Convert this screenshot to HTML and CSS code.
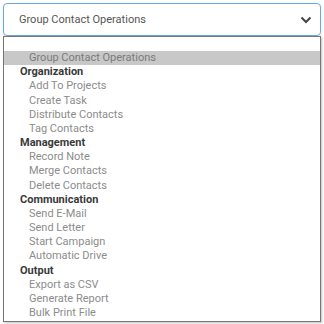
FILE: index.html
```html
<!DOCTYPE html>
<html lang="en">
<head>
    <meta charset="UTF-8">
    <title>Group Contact Operations</title>
    <link rel="stylesheet" href="styles.css">
</head>
<body>

    <!-- Select field -->
    <div class="select">
        <span class="select-value">Group Contact Operations</span>
        <svg class="chevron" width="12" height="8" viewBox="0 0 12 8">
            <path d="M1.5 1.5 L6 6 L10.5 1.5" fill="none" stroke="#444" stroke-width="2"/>
        </svg>
    </div>

    <!-- Open dropdown list -->
    <div class="menu">
        <div class="row"></div>
        <div class="row option selected">Group Contact Operations</div>

        <div class="row group">Organization</div>
        <div class="row option">Add To Projects</div>
        <div class="row option">Create Task</div>
        <div class="row option">Distribute Contacts</div>
        <div class="row option">Tag Contacts</div>

        <div class="row group">Management</div>
        <div class="row option">Record Note</div>
        <div class="row option">Merge Contacts</div>
        <div class="row option">Delete Contacts</div>

        <div class="row group">Communication</div>
        <div class="row option">Send E-Mail</div>
        <div class="row option">Send Letter</div>
        <div class="row option">Start Campaign</div>
        <div class="row option">Automatic Drive</div>

        <div class="row group">Output</div>
        <div class="row option">Export as CSV</div>
        <div class="row option">Generate Report</div>
        <div class="row option">Bulk Print File</div>
    </div>

</body>
</html>
```

FILE: styles.css
```css
body {
    margin: 0;
    padding: 3px;
    font-family: Roboto, "Liberation Sans", sans-serif;
    background-color: white;
}

/* Select field */
.select {
    height: 31px;
    border: 1px solid #6aaae4;
    border-radius: 4px;
    display: flex;
    align-items: center;
    justify-content: space-between;
    padding: 0 8px 0 15px;
    box-shadow: 0 1px 3px rgba(0, 0, 0, 0.12);
}

.select-value {
    font-size: 11px;
    color: #555;
}

/* Dropdown list */
.menu {
    border: 1px solid #767676;
    background-color: white;
    padding-bottom: 1px;
    box-shadow: 1px 1px 2px rgba(0, 0, 0, 0.25);
}

.row {
    height: 14.17px;
    line-height: 14px;
    font-size: 11px;
    padding-left: 16px;
    white-space: nowrap;
}

.group {
    font-weight: bold;
    color: #3a3a3a;
}

.option {
    padding-left: 25px;
    color: #8c8c8c;
}

.selected {
    background-color: #c8c8c8;
    color: #7a7a7a;
}
```
